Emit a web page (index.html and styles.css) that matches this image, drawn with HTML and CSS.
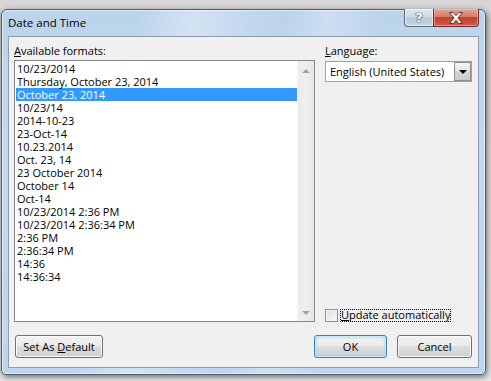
FILE: index.html
```html
<!DOCTYPE html>
<html>
<head>
<meta charset="utf-8">
<link rel="stylesheet" href="styles.css">
</head>
<body>
<div class="window">
  <div class="titlebar">
    <span class="title">Date and Time</span>
    <div class="caption-btns">
      <span class="cbtn help">?</span>
      <span class="cbtn close"><svg width="16" height="12" viewBox="0 0 16 12"><path d="M1.5 0.5h3.6l2.9 3.1 2.9-3.1h3.6l-4.6 5.5 4.6 5.5h-3.6l-2.9-3.2-2.9 3.2h-3.6l4.6-5.5z" fill="#fff" stroke="#5a2018" stroke-width="0.9" stroke-linejoin="round"/></svg></span>
    </div>
  </div>
  <div class="client">
    <div class="cols">
      <div class="col col-left">
        <div class="lbl"><u>A</u>vailable formats:</div>
        <div class="listbox">
          <ul class="items">
            <li>10/23/2014</li>
            <li>Thursday, October 23, 2014</li>
            <li class="sel">October 23, 2014</li>
            <li>10/23/14</li>
            <li>2014-10-23</li>
            <li>23-Oct-14</li>
            <li>10.23.2014</li>
            <li>Oct. 23, 14</li>
            <li>23 October 2014</li>
            <li>October 14</li>
            <li>Oct-14</li>
            <li>10/23/2014 2:36 PM</li>
            <li>10/23/2014 2:36:34 PM</li>
            <li>2:36 PM</li>
            <li>2:36:34 PM</li>
            <li>14:36</li>
            <li>14:36:34</li>
          </ul>
          <div class="vscroll"><span class="arr-up"></span><span class="arr-down"></span></div>
        </div>
      </div>
      <div class="col col-right">
        <div class="lbl"><u>L</u>anguage:</div>
        <div class="combo"><span class="combo-text">English (United States)</span><span class="drop"><span class="drop-arr"></span></span></div>
        <div class="spacer"></div>
        <div class="check"><span class="box"></span><span class="check-lbl"><u>U</u>pdate automatically</span></div>
      </div>
    </div>
    <div class="btnrow">
      <span class="btn btn-setdef"><span class="btn-text">Set As <u>D</u>efault</span></span>
      <div class="btn-pair">
        <span class="btn btn-ok default"><span class="btn-text">OK</span></span>
        <span class="btn btn-cancel"><span class="btn-text">Cancel</span></span>
      </div>
    </div>
  </div>
</div>
</body>
</html>
```
FILE: styles.css
```css
html, body {
  margin: 0;
  padding: 0;
}
body {
  width: 491px;
  height: 381px;
  overflow: hidden;
  background: linear-gradient(to bottom, #d6d6d6 0, #e9e9e9 100%);
  font-family: "Open Sans", "Noto Sans", "DejaVu Sans", sans-serif;
  font-size: 11px;
  color: #000;
}
.window {
  margin: 9px 0 0 1px;
  width: 485px;
  height: 366px;
  box-sizing: border-box;
  border: 1px solid #4e5c6c;
  border-radius: 6px 6px 5px 5px;
  padding: 0 6px 6px 6px;
  background:
    linear-gradient(100deg, rgba(255,255,255,0) 25%, rgba(255,255,255,0.35) 35%, rgba(255,255,255,0.1) 45%, rgba(255,255,255,0) 52%, rgba(255,255,255,0.25) 60%, rgba(255,255,255,0) 70%),
    linear-gradient(to bottom, #bcd3ec 0, #c3d9f0 40%, #bdd5ee 100%);
  box-shadow: inset 0 0 0 1px rgba(255,255,255,0.55), 1px 2px 6px rgba(0,0,0,0.55);
  display: flex;
  flex-direction: column;
}
.titlebar {
  height: 27px;
  display: flex;
  justify-content: space-between;
  align-items: flex-start;
}
.title {
  padding-top: 5px;
  line-height: 15px;
  font-size: 11.5px;
}
.caption-btns {
  display: flex;
  margin-top: -1px;
}
.cbtn {
  height: 18px;
  box-sizing: border-box;
  border: 1px solid #5b6877;
  border-top: none;
  display: flex;
  align-items: center;
  justify-content: center;
}
.help {
  width: 29px;
  border-radius: 0 0 0 4px;
  border-right: none;
  background: linear-gradient(to bottom, #dfe7f0 0, #cfdbe8 45%, #b8c8da 50%, #c5d3e2 100%);
  box-shadow: inset 0 0 0 1px rgba(255,255,255,0.6);
  color: #fff;
  font-family: "DejaVu Sans", sans-serif;
  font-weight: bold;
  font-size: 13px;
  line-height: 16px;
  text-shadow: 0 0 1px #2f3d4c, 0 0 1px #2f3d4c, 0 0 1px #2f3d4c;
}
.close {
  width: 46px;
  border-radius: 0 0 4px 0;
  border-color: #6b2a22;
  background: linear-gradient(to bottom, #e4a495 0, #d77b6b 45%, #c2412c 50%, #d25b46 100%);
  box-shadow: inset 0 0 0 1px rgba(255,210,200,0.5);
}
.close svg {
  display: block;
}
.client {
  flex: 1;
  box-sizing: border-box;
  border: 1px solid #8e9cad;
  background: #f0f0f0;
  padding: 6px 6px 9px 5px;
  display: flex;
  flex-direction: column;
}
.cols {
  display: grid;
  grid-template-columns: 301px 147px;
  column-gap: 10px;
}
.col {
  display: flex;
  flex-direction: column;
}
.lbl {
  line-height: 15px;
  height: 15px;
}
.listbox {
  margin-top: 2px;
  height: 262px;
  box-sizing: border-box;
  border: 1px solid #828790;
  background: #fff;
  display: flex;
}
.items {
  list-style: none;
  margin: 0;
  padding: 1px 0 0 1px;
  flex: 1;
}
.items li {
  height: 13px;
  line-height: 13px;
  padding-left: 1px;
  white-space: nowrap;
}
.items li.sel {
  background: #3399ff;
  color: #fff;
}
.vscroll {
  width: 17px;
  background: linear-gradient(to right, #f7f7f7 0, #f7f7f7 1px, #ebebeb 1px, #efefef 50%, #e5e5e5 100%);
  display: flex;
  flex-direction: column;
  align-items: center;
  justify-content: space-between;
  padding: 8px 0 6px;
  box-sizing: border-box;
}
.arr-up {
  width: 0;
  height: 0;
  border-left: 4px solid transparent;
  border-right: 4px solid transparent;
  border-bottom: 4px solid #a4a4a4;
}
.arr-down {
  width: 0;
  height: 0;
  border-left: 4px solid transparent;
  border-right: 4px solid transparent;
  border-top: 4px solid #a4a4a4;
}
.combo {
  margin-top: 3px;
  height: 21px;
  box-sizing: border-box;
  border: 1px solid #a2a2a2;
  background: #fff;
  display: flex;
  align-items: stretch;
}
.combo-text {
  flex: 1;
  padding-left: 4px;
  line-height: 19px;
  white-space: nowrap;
}
.drop {
  width: 17px;
  box-sizing: border-box;
  border: 1px solid #8c8c8c;
  background: linear-gradient(to bottom, #f3f3f3 0, #e6e6e6 45%, #d6d6d6 50%, #c9c9c9 100%);
  display: flex;
  align-items: center;
  justify-content: center;
}
.drop-arr {
  width: 0;
  height: 0;
  border-left: 4px solid transparent;
  border-right: 4px solid transparent;
  border-top: 4px solid #000;
}
.spacer {
  flex: 1;
}
.check {
  display: flex;
  align-items: center;
  height: 13px;
}
.box {
  width: 13px;
  height: 13px;
  box-sizing: border-box;
  border: 1px solid #8f8f8f;
  background: linear-gradient(135deg, #dadada 0, #f2f2f2 70%, #fbfbfb 100%);
  box-shadow: inset 0 0 0 1px #f4f4f4;
}
.check-lbl {
  margin-left: 2px;
  height: 13px;
  line-height: 12px;
  padding: 0 1px;
  outline: 1px dotted #000;
  outline-offset: -1px;
  box-sizing: border-box;
  white-space: nowrap;
}
.btnrow {
  margin-top: 13px;
  display: flex;
  justify-content: space-between;
  align-items: flex-start;
}
.btn-pair {
  display: flex;
  gap: 10px;
}
.btn {
  height: 23px;
  box-sizing: border-box;
  border: 1px solid #707070;
  border-radius: 3px;
  background: linear-gradient(to bottom, #f2f2f2 0, #ebebeb 50%, #dddddd 50%, #cfcfcf 100%);
  box-shadow: inset 0 0 0 1px #fbfbfb;
  display: flex;
  align-items: center;
  justify-content: center;
}
.btn-text {
  line-height: 15px;
  white-space: nowrap;
}
.btn-setdef {
  width: 88px;
  margin-left: 1px;
}
.btn-ok {
  width: 73px;
}
.btn-cancel {
  width: 75px;
}
.btn.default {
  border-color: #3c7fb1;
  box-shadow: inset 0 0 0 1px #cde9f8, inset 0 0 2px 2px rgba(150,205,240,0.55);
}
```
